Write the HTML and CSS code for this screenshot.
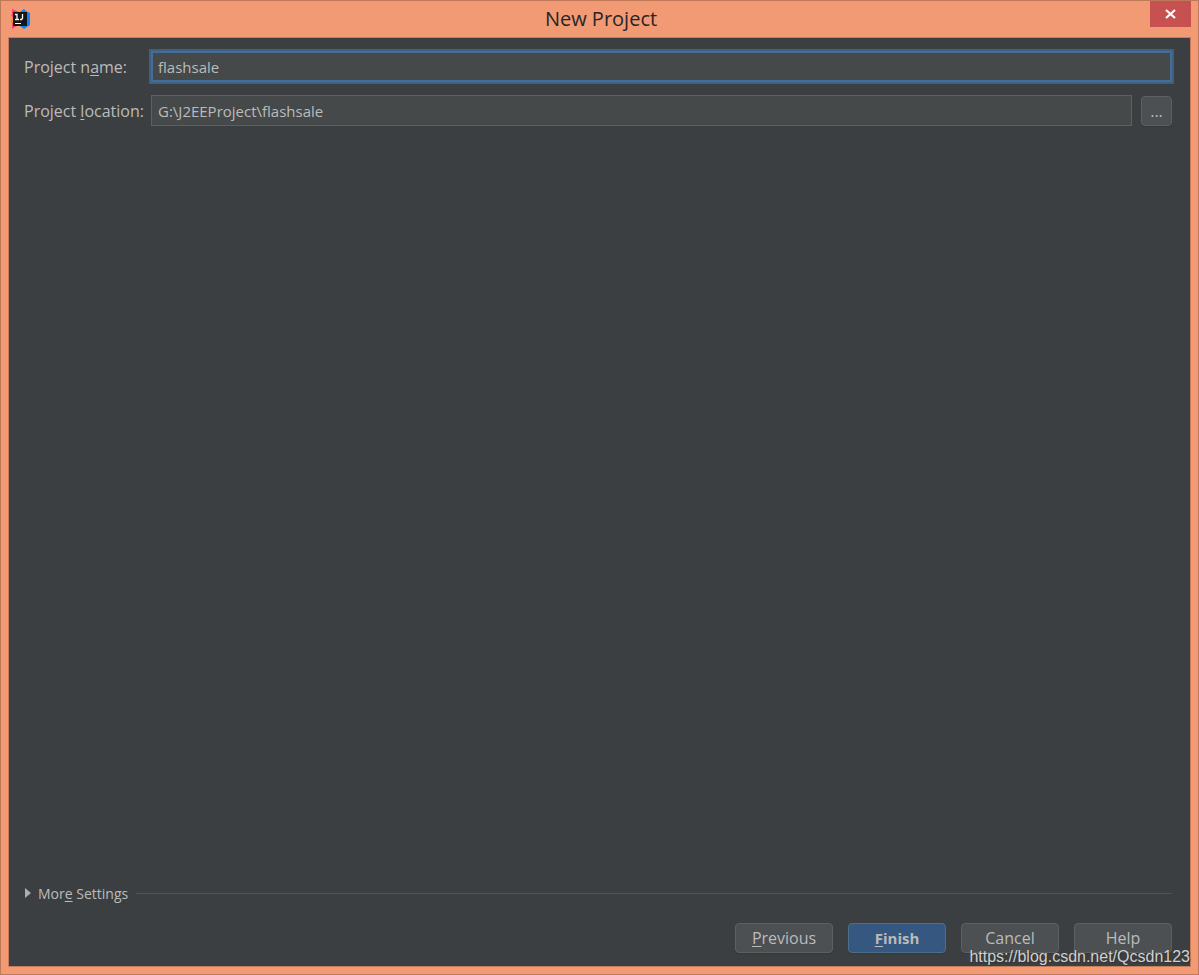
FILE: index.html
```html
<!DOCTYPE html>
<html lang="en">
<head>
    <meta charset="UTF-8">
    <meta name="viewport" content="width=device-width, initial-scale=1.0">
    <title>New Project</title>
    <link rel="stylesheet" href="styles.css">
</head>
<body>
    <div class="window">
        <header class="titlebar">
            <svg class="logo" width="20" height="20" viewBox="0 0 20 20" aria-hidden="true">
                <path d="M1 0L6 2L10 4V16L6 17L1 20V14L0 12L2 8L0 7L1 5Z" fill="#ff3d6e"/>
                <path d="M0 11L2 9L5 13L1 14Z" fill="#ff8f1f"/>
                <path d="M9 3L13 0L15 2L19 4V16L13 20L9 17Z" fill="#0a84ff"/>
                <path d="M2 3H16V17H2Z" fill="#161616"/>
                <path d="M4 5.5H6V10.5M4 10.5H8M11.5 5V9.5L10.5 10.5H9" fill="none" stroke="#fff" stroke-width="1.3"/>
                <path d="M4 14H10V15H4Z" fill="#fff"/>
            </svg>
            <h1>New Project</h1>
            <button type="button" class="close" aria-label="Close">
                <svg width="12" height="10" viewBox="0 0 12 10" aria-hidden="true">
                    <path d="M1 1L10 9M10 1L1 9" stroke="#fff" stroke-width="2.2"/>
                </svg>
            </button>
        </header>

        <form class="content">
            <div class="row">
                <label for="projectName">Project n<u>a</u>me:</label>
                <input type="text" id="projectName" class="active" value="flashsale">
            </div>
            <div class="row">
                <label for="projectLocation">Project <u>l</u>ocation:</label>
                <input type="text" id="projectLocation" value="G:\J2EEProject\flashsale">
                <button type="button" class="browse" aria-label="Browse">...</button>
            </div>

            <div class="more">
                <button type="button" class="more-toggle">
                    <svg width="6" height="10" viewBox="0 0 6 10" aria-hidden="true"><path d="M0 0L6 5L0 10Z" fill="#adadad"/></svg>
                    <span>Mor<u>e</u> Settings</span>
                </button>
                <span class="line"></span>
            </div>

            <div class="actions">
                <button type="button"><u>P</u>revious</button>
                <button type="submit" class="primary"><u>F</u>inish</button>
                <button type="button">Cancel</button>
                <button type="button">Help</button>
            </div>
        </form>
        <div class="watermark">https://blog.csdn.net/Qcsdn123</div>
    </div>
</body>
</html>
```
FILE: styles.css
```css
* {
    box-sizing: border-box;
}
body {
    margin: 0;
    font-family: "Open Sans", "Noto Sans", sans-serif;
    font-size: 16px;
    color: #bbbbbb;
}
.window {
    position: relative;
    display: flex;
    flex-direction: column;
    min-height: 100vh;
    padding: 0 7px 7px;
    background-color: #f29a74;
    border: 1px solid #bf7858;
}
.titlebar {
    display: grid;
    grid-template-columns: 1fr auto 1fr;
    height: 36px;
    padding-left: 3px;
}
.logo {
    margin-top: 8px;
}
h1 {
    margin: 0;
    font-size: 20px;
    font-weight: normal;
    line-height: 36px;
    color: #262626;
}
button {
    padding: 0;
    font-family: inherit;
    font-size: inherit;
    color: inherit;
}
.close {
    display: flex;
    justify-content: center;
    align-items: center;
    justify-self: end;
    width: 41px;
    height: 26px;
    background-color: #c75050;
    border: none;
}
.content {
    display: flex;
    flex: 1;
    flex-direction: column;
    padding: 13px 18px 13px 15px;
    background-color: #3c3f41;
    border: 1px solid #c97c5b;
}
.row {
    display: flex;
    align-items: center;
    height: 31px;
    margin-bottom: 13px;
}
.row label {
    width: 127px;
    white-space: nowrap;
}
u {
    text-underline-offset: 2px;
    text-decoration-skip-ink: none;
}
input {
    flex: 1;
    min-width: 0;
    height: 31px;
    padding: 0 6px;
    font-family: inherit;
    font-size: 15px;
    color: #bbbbbb;
    background-color: #45494a;
    border: 1px solid #5e6060;
    outline: none;
}
input.active {
    padding: 0 6px;
    border-color: #466d94;
    box-shadow: 0 0 0 2px #3d6185, inset 0 0 0 1px #466d94;
}
.browse,
.actions button {
    height: 30px;
    background-color: #4c5052;
    border: 1px solid #5e6060;
    border-radius: 4px;
    box-shadow: 0 1px 1px #363839;
}
.browse {
    width: 31px;
    margin-left: 9px;
}
.more {
    display: flex;
    align-items: center;
    margin-top: auto;
    margin-bottom: 20px;
}
.more-toggle {
    display: flex;
    align-items: center;
    gap: 7px;
    height: 20px;
    padding-left: 1px;
    font-size: 14px;
    background: none;
    border: none;
}
.line {
    flex: 1;
    height: 1px;
    margin-left: 8px;
    background-color: #515456;
}
.actions {
    display: flex;
    justify-content: flex-end;
    gap: 15px;
}
.actions button {
    width: 98px;
}
.actions .primary {
    font-weight: bold;
    font-size: 15px;
    background-color: #365880;
    border-color: #4c708c;
}
.watermark {
    position: absolute;
    right: 8px;
    bottom: 7px;
    font-family: "Liberation Sans", Arial, sans-serif;
    font-size: 16px;
    line-height: 20px;
    color: #d0d0d0;
    text-shadow: 1px 1px 1px #333333;
    pointer-events: none;
}
```
